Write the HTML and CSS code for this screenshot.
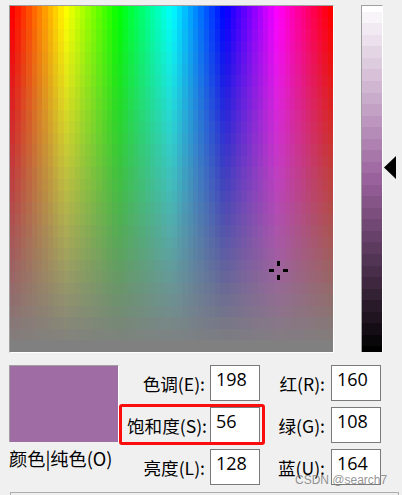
FILE: index.html
```html
<!DOCTYPE html>
<html lang="zh">
<head>
<meta charset="utf-8">
<title>颜色</title>
<link rel="stylesheet" href="styles.css">
</head>
<body>
<div class="dialog">
  <div class="picker">
    <div class="field">
      <canvas id="spectrum" width="323" height="346"></canvas>
      <svg class="cross" width="19" height="19" viewBox="0 0 19 19" shape-rendering="crispEdges"><path d="M8 0h3v5H8zM8 14h3v5H8zM0 8h5v3H0zM14 8h5v3h-5z" fill="#000"/></svg>
    </div>
    <div class="lum"><canvas id="lum" width="20" height="346"></canvas></div>
    <svg class="arrow" width="12" height="23" viewBox="0 0 12 23"><path d="M0 11.5L12 0v23z" fill="#000"/></svg>
  </div>
  <div class="lower">
    <div class="preview">
      <div class="swatch"></div>
      <div class="swatch-label">颜色|纯色(O)</div>
    </div>
    <div class="values">
      <label class="lab">色调(E):</label><div class="box">198</div>
      <label class="lab lab-r">红(R):</label><div class="box">160</div>
      <label class="lab lab-s">饱和度(S):</label><div class="box">56</div>
      <label class="lab lab-r">绿(G):</label><div class="box">108</div>
      <label class="lab">亮度(L):</label><div class="box">128</div>
      <label class="lab lab-r">蓝(U):</label><div class="box">164</div>
      <div class="redbox"></div>
    </div>
  </div>
  <div class="addbtn"></div>
  <div class="watermark">CSDN @search7</div>
</div>
<script src="app.js"></script>
</body>
</html>
```
FILE: styles.css
```css
* { box-sizing: border-box; }
html, body { margin: 0; padding: 0; }
body { width: 402px; height: 495px; overflow: hidden; background: #f0f0f0; font-family: "Noto Sans CJK SC", "Open Sans", sans-serif; color: #000; }
.dialog { position: relative; height: 495px; padding: 5px 0 0 9px; }
.picker { display: flex; align-items: flex-start; height: 348px; }
.field { position: relative; width: 325px; height: 348px; border-top: 1px solid #a0a0a0; border-left: 1px solid #a0a0a0; border-right: 1px solid #fff; border-bottom: 1px solid #fff; }
.field canvas, .lum canvas { display: block; }
.cross { position: absolute; left: 259px; top: 255px; }
.lum { width: 22px; height: 347px; margin-left: 27px; border-top: 1px solid #a0a0a0; border-left: 1px solid #a0a0a0; border-right: 1px solid #fff; }
.arrow { margin: 151px 0 0 1px; }
.lower { display: flex; margin-top: 12px; height: 120px; }
.preview { width: 110px; }
.swatch { width: 110px; height: 77px; background: #a06ca4; border-top: 1px solid #a0a0a0; border-left: 1px solid #a0a0a0; border-right: 1px solid #fff; }
.swatch-label { font-size: 18.2px; line-height: 24px; margin-top: 4px; white-space: nowrap; }
.values { position: relative; display: grid; grid-template-columns: 91px 50px 71px 50px; grid-template-rows: 36px 36px 36px; row-gap: 6px; }
.lab { font-size: 17.6px; line-height: 36px; text-align: right; padding-right: 5px; white-space: nowrap; padding-top: 1px; }
.lab-r { padding-right: 6px; }
.lab-s { padding-right: 3px; }
.box { width: 50px; height: 36px; background: #fff; border: 1px solid #7a7a7a; font-family: "Open Sans", sans-serif; font-size: 18px; line-height: 27px; padding-left: 5px; }
.redbox { position: absolute; left: 0; top: 39px; width: 146px; height: 41px; border: 3px solid #fb0d0d; border-radius: 3px; pointer-events: none; }
.addbtn { height: 10px; margin: 7px 3px 0 1px; border: 1px solid #adadad; background: #efefef; }
.watermark { position: absolute; left: 295px; top: 473px; font-family: "Liberation Sans", sans-serif; font-size: 12px; color: rgba(120, 120, 120, 0.8); white-space: nowrap; }
```
FILE: app.js
```js
function hsl(h, s, l) {
  h = h / 240; s = s / 240; l = l / 240;
  var q = l < .5 ? l * (1 + s) : l + s - l * s, p = 2 * l - q;
  function f(t) {
    if (t < 0) t += 1;
    if (t > 1) t -= 1;
    if (t < 1 / 6) return p + (q - p) * 6 * t;
    if (t < 1 / 2) return q;
    if (t < 2 / 3) return p + (q - p) * (2 / 3 - t) * 6;
    return p;
  }
  return "rgb(" + Math.round(f(h + 1 / 3) * 255) + "," + Math.round(f(h) * 255) + "," + Math.round(f(h - 1 / 3) * 255) + ")";
}
var c = document.getElementById("spectrum").getContext("2d");
var W = 323, H = 346, NX = 60, NY = 30;
for (var i = 0; i < NX; i++) {
  for (var j = 0; j < NY; j++) {
    c.fillStyle = hsl(i * 240 / (NX - 1), 240 - j * 240 / (NY - 1), 120);
    var x0 = Math.round(i * W / NX), x1 = Math.round((i + 1) * W / NX);
    var y0 = Math.round(j * H / NY), y1 = Math.round((j + 1) * H / NY);
    c.fillRect(x0, y0, x1 - x0, y1 - y0);
  }
}
var l = document.getElementById("lum").getContext("2d");
for (var k = 0; k <= NY; k++) {
  l.fillStyle = hsl(198, 56, 240 - k * 8);
  var a = Math.max(0, Math.round((k - 0.5) * H / NY)), b = Math.min(H, Math.round((k + 0.5) * H / NY));
  l.fillRect(0, a, 20, b - a);
}
```
